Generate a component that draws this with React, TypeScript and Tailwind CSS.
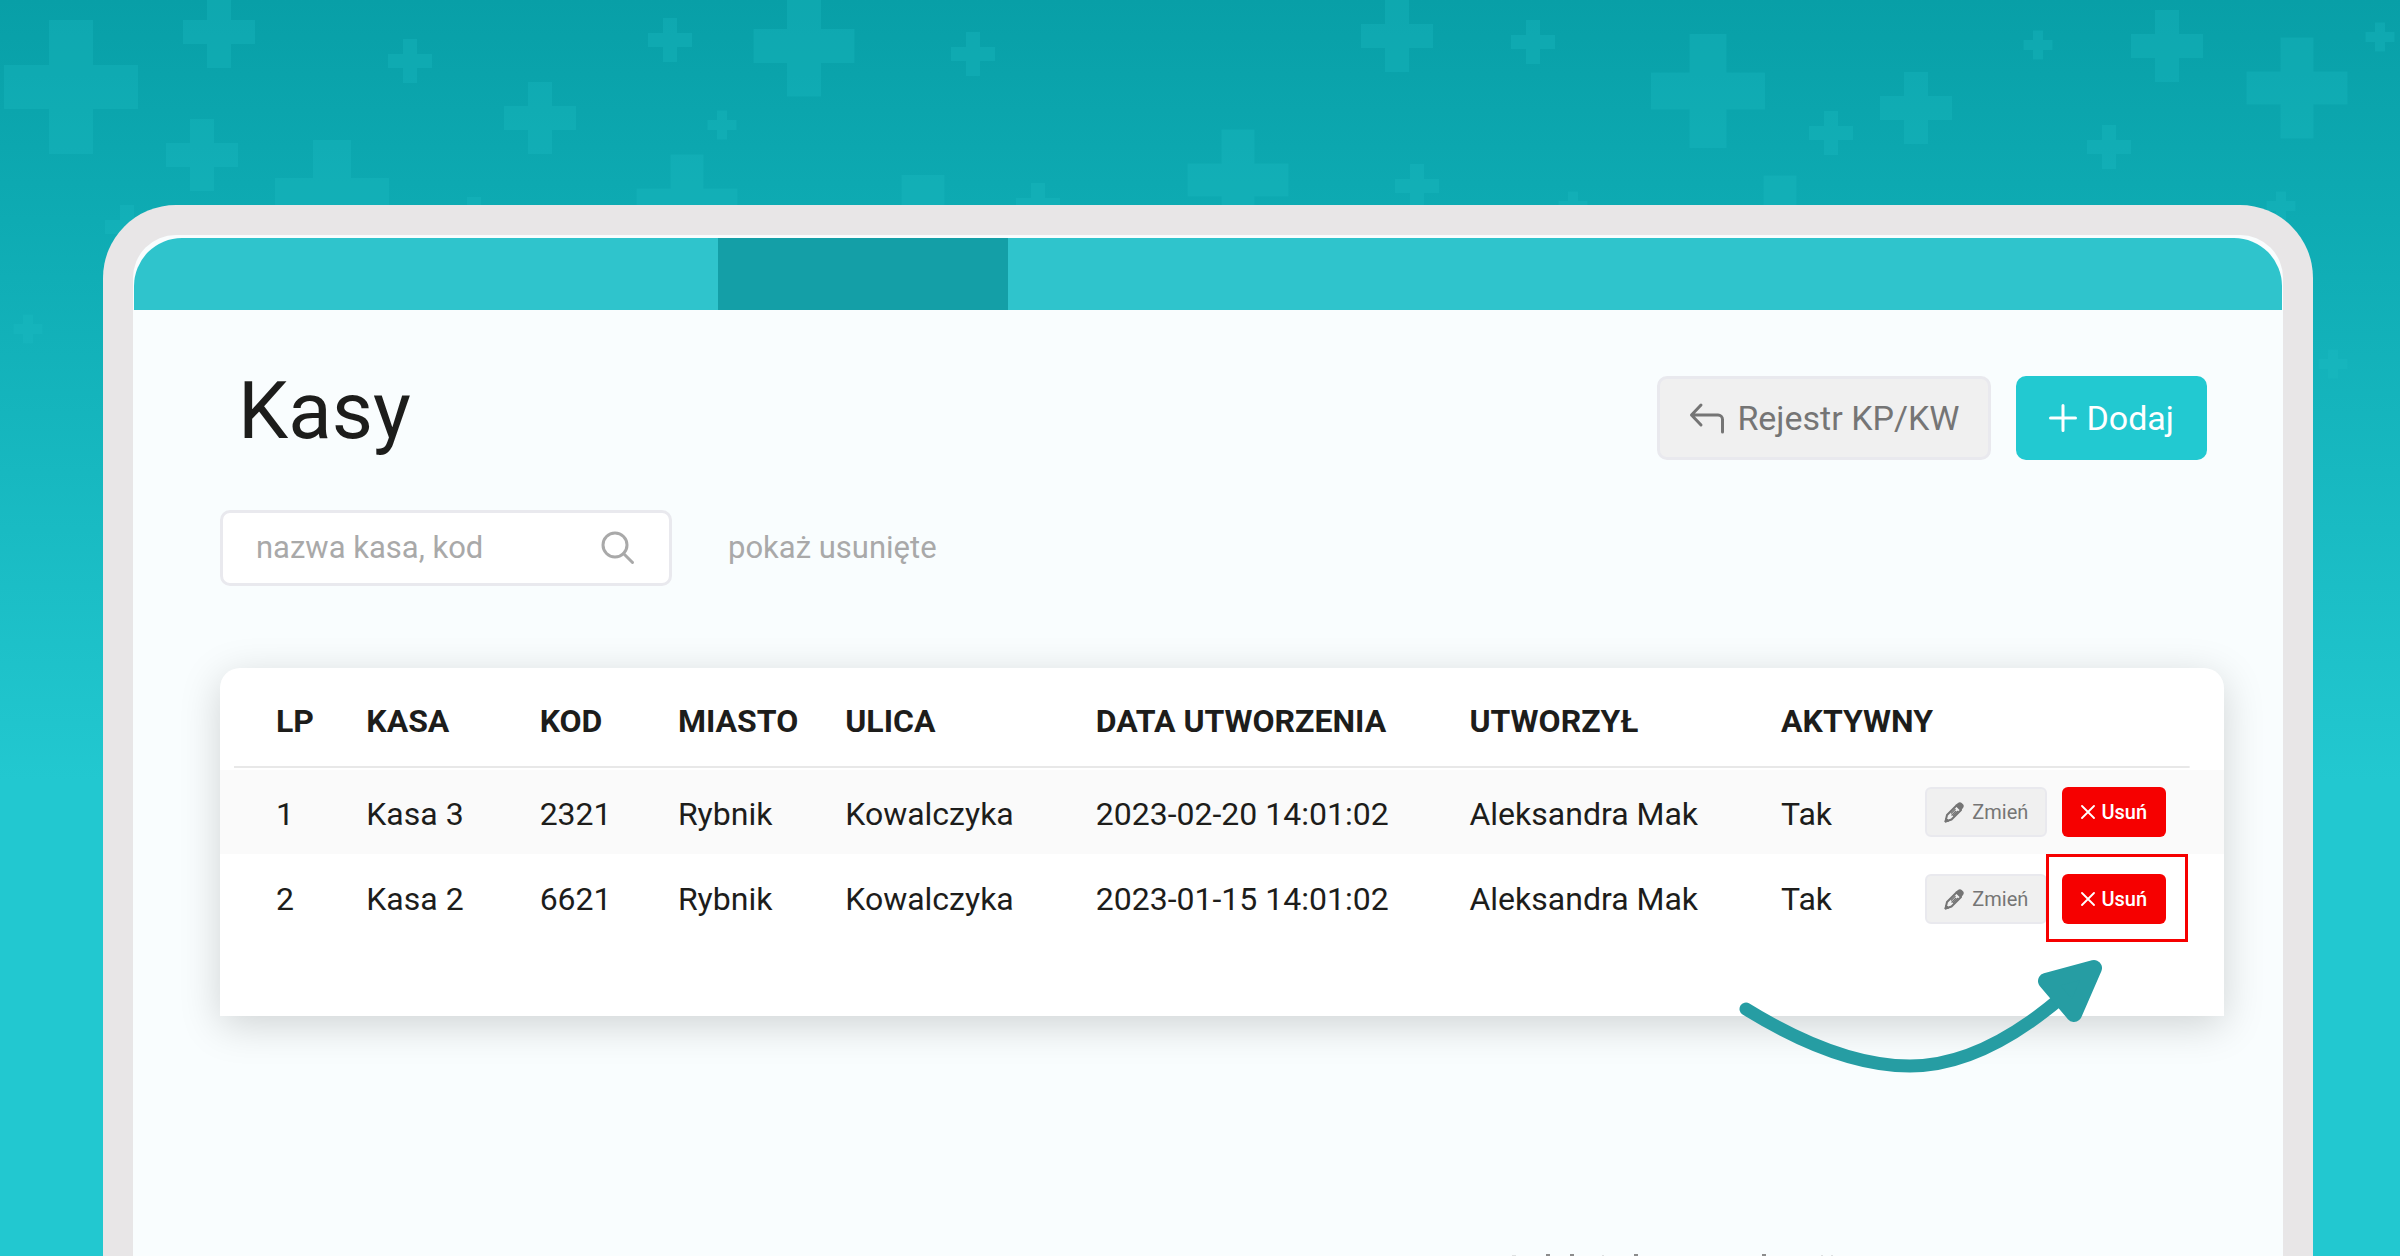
import { useState } from "react";

type Kasa = {
  lp: number;
  name: string;
  code: string;
  city: string;
  street: string;
  createdAt: string;
  createdBy: string;
  active: boolean;
};

const KASY: Kasa[] = [
  { lp: 1, name: "Kasa 3", code: "2321", city: "Rybnik", street: "Kowalczyka", createdAt: "2023-02-20 14:01:02", createdBy: "Aleksandra Mak", active: true },
  { lp: 2, name: "Kasa 2", code: "6621", city: "Rybnik", street: "Kowalczyka", createdAt: "2023-01-15 14:01:02", createdBy: "Aleksandra Mak", active: true },
];

const COLUMNS = [
  { label: "LP", className: "w-[7.3%] pl-14" },
  { label: "KASA", className: "w-[8.65%]" },
  { label: "KOD", className: "w-[6.9%]" },
  { label: "MIASTO", className: "w-[8.35%]" },
  { label: "ULICA", className: "w-[12.5%]" },
  { label: "DATA UTWORZENIA", className: "w-[18.65%]" },
  { label: "UTWORZYŁ", className: "w-[15.55%]" },
  { label: "AKTYWNY", className: "w-[7.2%]" },
];

// center x, center y, width, height, vertical arm width, horizontal arm height
const PLUSES = [
  [71, 87, 134, 134, 44, 44],
  [219, 32, 72, 72, 24, 24],
  [410, 61, 44, 44, 14, 14],
  [202, 155, 72, 72, 24, 24],
  [332, 197, 114, 114, 38, 38],
  [540, 118, 72, 72, 24, 24],
  [670, 40, 44, 44, 14, 14],
  [722, 125, 29, 29, 10, 10],
  [804, 46, 101, 101, 34, 34],
  [973, 54, 44, 44, 14, 14],
  [687, 205, 101, 101, 33, 33],
  [474, 219, 44, 44, 14, 14],
  [127, 227, 44, 44, 14, 14],
  [28, 329, 29, 29, 10, 10],
  [923, 242, 134, 134, 43, 43],
  [1038, 205, 44, 44, 14, 14],
  [1238, 180, 101, 101, 33, 33],
  [1397, 36, 72, 72, 24, 24],
  [1533, 42, 44, 44, 14, 14],
  [1417, 186, 44, 44, 14, 14],
  [1573, 206, 29, 29, 10, 10],
  [1708, 91, 114, 114, 37, 37],
  [1916, 108, 72, 72, 24, 24],
  [1831, 133, 44, 44, 14, 14],
  [1780, 226, 101, 101, 33, 33],
  [2038, 45, 29, 29, 10, 10],
  [2167, 46, 72, 72, 24, 24],
  [2109, 147, 44, 44, 14, 14],
  [2297, 88, 101, 101, 33, 33],
  [2380, 37, 29, 29, 10, 10],
  [2281, 206, 29, 29, 10, 10],
  [2333, 364, 29, 29, 10, 10],
];

function PlusPattern() {
  return (
    <svg className="absolute left-0 top-0" width="2400" height="420" viewBox="0 0 2400 420" fill="#1fbcc4" fillOpacity="0.3" aria-hidden="true">
      {PLUSES.map(([cx, cy, w, h, vw, hh]) => (
        <path
          key={`${cx}-${cy}`}
          d={`M${cx - vw / 2} ${cy - h / 2}h${vw}v${(h - hh) / 2}h${(w - vw) / 2}v${hh}h${-(w - vw) / 2}v${(h - hh) / 2}h${-vw}v${-(h - hh) / 2}h${-(w - vw) / 2}v${-hh}h${(w - vw) / 2}z`}
        />
      ))}
    </svg>
  );
}

function BackIcon() {
  return (
    <svg width="36" height="32" viewBox="0 0 36 32" fill="none" stroke="currentColor" strokeWidth="3" strokeLinecap="round" strokeLinejoin="round" aria-hidden="true">
      <path d="M12 3 2.500 13 12 23M2.500 13H29a4.500 4.500 0 0 1 4.500 4.500V30" />
    </svg>
  );
}

function PlusIcon() {
  return (
    <svg width="28" height="28" viewBox="0 0 28 28" fill="none" stroke="currentColor" strokeWidth="3" strokeLinecap="round" aria-hidden="true">
      <path d="M14 1.500v25M1.500 14h25" />
    </svg>
  );
}

function SearchIcon() {
  return (
    <svg width="34" height="34" viewBox="0 0 34 34" fill="none" stroke="currentColor" strokeWidth="3" strokeLinecap="round" aria-hidden="true">
      <circle cx="14" cy="14" r="12" />
      <path d="m22.500 22.500 9 9" />
    </svg>
  );
}

function PencilIcon() {
  return (
    <svg width="20" height="21" viewBox="0 0 20 21" fill="none" aria-hidden="true">
      <path d="M1.500 19.500 3 13 12.500 3.500l4.500 4.500L7.500 17.500z" stroke="currentColor" strokeWidth="2" strokeLinejoin="round" />
      <path d="m11.500 3 2.500-2c1.200-1 2.600-1 3.700 0l1.300 1.300c1 1.100 1 2.500 0 3.700l-2 2.500z" fill="currentColor" />
      <path d="m7 11.500 4.500-4.500M9 14l5-5M7.500 13.500l4.500-4.500" stroke="currentColor" strokeWidth="1.200" />
      <path d="m1 20 1-4 3 3z" fill="currentColor" stroke="currentColor" />
    </svg>
  );
}

function CrossIcon() {
  return (
    <svg width="14" height="14" viewBox="0 0 14 14" fill="none" stroke="currentColor" strokeWidth="1.800" strokeLinecap="round" aria-hidden="true">
      <path d="m1 1 12 12M13 1 1 13" />
    </svg>
  );
}

function HintArrow() {
  return (
    <svg className="absolute right-[120px] top-[290px]" width="366" height="118" viewBox="0 0 366 118" fill="none" stroke="#269da3" strokeLinecap="round" strokeLinejoin="round" aria-hidden="true">
      <path d="M8 51C68 88 122 108 172 108c52 0 104-28 152-69" strokeWidth="13" />
      <path d="m356 10-48 13 28 33z" fill="#269da3" strokeWidth="16" />
    </svg>
  );
}

// Tops of the next line, cut off by the bottom edge of the screen
function ClippedLine() {
  return (
    <svg className="mr-[446px] mt-auto self-end" width="324" height="2" viewBox="0 0 324 2" fill="#8c8c8c" aria-hidden="true">
      <path d="M34 0h4v2h-4zM58 0h4v2h-4zM122 0h4v2h-4zM250 0h4v2h-4z" />
      <path d="M0 1h4v1H0zM90 1h2v1h-2zM309 1h2v1h-2zM319 1h2v1h-2z" opacity="0.25" />
    </svg>
  );
}

export default function App() {
  const [query, setQuery] = useState("");

  return (
    <main className="relative flex h-screen flex-col overflow-hidden bg-[linear-gradient(180deg,#089fa7_0px,#0eabb3_220px,#22c8d0_780px)] pl-[103px] pr-[87px] pt-[205px] font-[Roboto,sans-serif] text-[#1d1d1b]">
      <PlusPattern />

      {/* Tablet frame */}
      <div className="relative flex-1 rounded-t-[73px] bg-[#e8e6e7] px-[30px] pt-[30px]">
        <div className="flex h-full flex-col rounded-t-[43px] bg-[#f9fdfe] px-px pt-[3px]">
          <nav className="flex h-[72px] overflow-hidden rounded-t-[48px] bg-[#2fc4cc]">
            <div className="w-[27.2%]" />
            <div className="w-[13.5%] bg-[#149fa7]" />
          </nav>

          <div className="pl-[86px] pr-[58px]">
            <header className="flex items-start justify-between pl-[18px] pr-[17px] pt-[66px]">
              <h1 className="text-[80px] leading-[70px]">Kasy</h1>
              <div className="flex gap-[25px] text-[34px] leading-10">
                <button className="flex h-[84px] items-center gap-3 rounded-[10px] border-[3px] border-[#e9e9ee] bg-[#f0f0f0] px-[29px] text-[#757575]">
                  <BackIcon />
                  Rejestr KP/KW
                </button>
                <button className="flex h-[84px] items-center gap-[9px] rounded-[10px] bg-[#22c9d1] px-[33px] text-white">
                  <PlusIcon />
                  Dodaj
                </button>
              </div>
            </header>

            <div className="mt-[50px] flex items-center gap-14 text-[31px] text-[#a9a9a9]">
              <label className="flex h-[76px] w-[452px] items-center rounded-[10px] border-[3px] border-[#e9e9ee] bg-white pl-[33px] pr-[34px]">
                <input
                  type="text"
                  aria-label="nazwa kasa, kod"
                  value={query}
                  onChange={(e) => setQuery(e.target.value)}
                  placeholder="nazwa kasa, kod"
                  className="min-w-0 flex-1 bg-transparent text-[#1d1d1b] outline-none placeholder:text-[#a9a9a9]"
                />
                <SearchIcon />
              </label>
              <button>pokaż usunięte</button>
            </div>

            {/* Table card */}
            <section className="relative mt-[82px] h-[348px] rounded-t-[20px] bg-white shadow-[0_9px_40px_rgba(0,0,0,0.17)]">
              <table className="w-full table-fixed text-left text-[32px] leading-10">
                <thead>
                  <tr className="h-[102px] bg-[linear-gradient(#e8e8e8,#e8e8e8)] bg-[length:calc(100%-48px)_2px] bg-[position:14px_98px] bg-no-repeat">
                    {COLUMNS.map((c) => (
                      <th key={c.label} className={`${c.className} whitespace-nowrap pt-1 font-bold`}>{c.label}</th>
                    ))}
                    <th className="w-[14.9%]" aria-label="Akcje" />
                  </tr>
                </thead>
                <tbody>
                  {KASY.map((k) => (
                    <tr key={k.lp} className="group h-[84px] whitespace-nowrap odd:bg-[#fafafa] even:h-[90px]">
                      <td className="pl-14 group-odd:pt-1">{k.lp}</td>
                      <td className="group-odd:pt-1">{k.name}</td>
                      <td className="group-odd:pt-1">{k.code}</td>
                      <td className="group-odd:pt-1">{k.city}</td>
                      <td className="group-odd:pt-1">{k.street}</td>
                      <td className="group-odd:pt-1">{k.createdAt}</td>
                      <td className="group-odd:pt-1">{k.createdBy}</td>
                      <td className="group-odd:pt-1">{k.active ? "Tak" : "Nie"}</td>
                      <td>
                        <div className="flex gap-[15px] text-xl">
                          <button className="flex h-[50px] items-center gap-2 rounded-md border-2 border-[#e9e9ee] bg-[#f0f0f0] px-[17px] text-[#757575]">
                            <PencilIcon />
                            Zmień
                          </button>
                          <div className="relative">
                            <button className="flex h-[50px] items-center gap-[6px] rounded-md bg-[#f60000] px-[19px] font-medium text-white">
                              <CrossIcon />
                              Usuń
                            </button>
                            {k.lp === 2 && (
                              <div className="pointer-events-none absolute -bottom-[18px] -left-4 -right-[22px] -top-5 border-[3px] border-[#f60000]" />
                            )}
                          </div>
                        </div>
                      </td>
                    </tr>
                  ))}
                </tbody>
              </table>
              <HintArrow />
            </section>
          </div>

          <ClippedLine />
        </div>
      </div>
    </main>
  );
}
